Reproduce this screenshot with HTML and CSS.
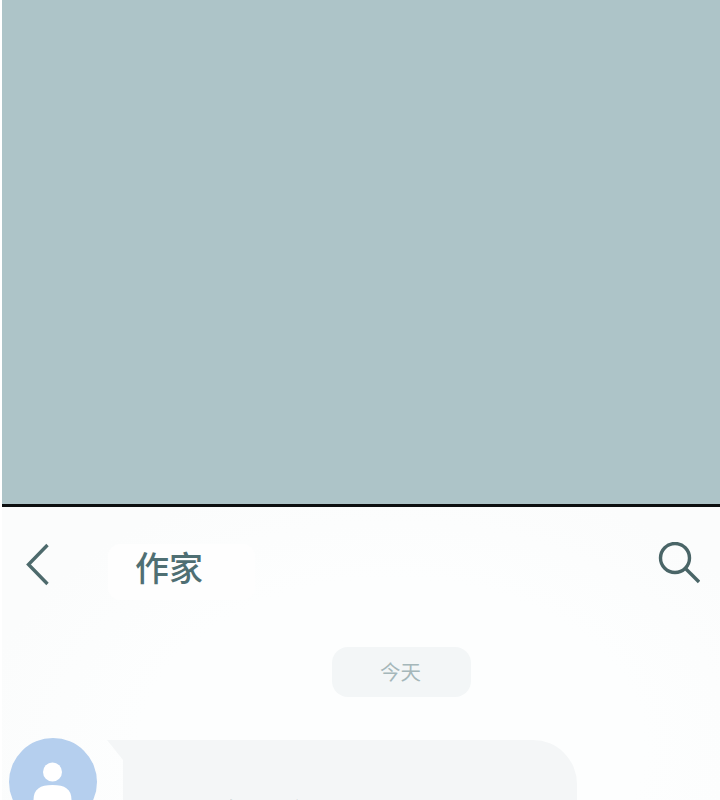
FILE: index.html
```html
<!DOCTYPE html>
<html lang="zh-CN">
<head>
    <meta charset="UTF-8">
    <title>作家</title>
    <link rel="stylesheet" href="styles.css">
</head>
<body>
    <div class="frame">
        <div class="cover"></div>
        <div class="divider"></div>
        <div class="chat">
            <header class="chat-header">
                <button class="icon-btn">
                    <svg width="26" height="44" viewBox="0 0 26 44">
                        <path d="M22.5 3 L3.5 22.5 L22.5 42" fill="none" stroke="#4d6a6c" stroke-width="3.4"/>
                    </svg>
                </button>
                <h1 class="chat-title">作家</h1>
                <button class="icon-btn search-btn">
                    <svg width="42" height="44" viewBox="0 0 42 44">
                        <circle cx="17" cy="16" r="14.5" fill="none" stroke="#4a6567" stroke-width="3.4"/>
                        <path d="M27.5 26.5 L41 40" fill="none" stroke="#4a6567" stroke-width="3.4"/>
                    </svg>
                </button>
            </header>
            <div class="date-row">
                <span class="date-pill">今天</span>
            </div>
            <div class="message">
                <div class="avatar">
                    <svg width="88" height="88" viewBox="0 0 88 88">
                        <circle cx="44" cy="44" r="44" fill="#b5cfee"/>
                        <circle cx="43.5" cy="34" r="9.5" fill="#fff"/>
                        <path d="M24.5 62 C24.5 51 31 47 43.5 47 C56 47 62.500 51 62.500 62 Z" fill="#fff"/>
                    </svg>
                </div>
                <div class="bubble">
                    <p class="bubble-text">你好，有什么作品</p>
                </div>
            </div>
        </div>
    </div>
</body>
</html>
```

FILE: styles.css
```css
html, body {
    margin: 0;
    height: 800px;
    overflow: hidden;
}

body {
    background-color: #fff;
    font-family: "Noto Sans CJK SC", "Liberation Sans", sans-serif;
}

.frame {
    height: 800px;
    margin-left: 2px;
    overflow: hidden;
}

.cover {
    height: 504px;
    background-color: #adc4c8;
}

.divider {
    height: 3px;
    background-color: #0c0f10;
}

.chat {
    height: 293px;
    background: radial-gradient(ellipse 420px 280px at 390px 240px, #fdfefe 60%, #fbfcfc 100%);
}

.chat-header {
    display: flex;
    align-items: flex-start;
    padding: 35px 20px 0 23px;
}

.icon-btn {
    display: flex;
    padding: 0;
    border: none;
    background: none;
}

.search-btn {
    margin-left: auto;
}

.chat-title {
    width: 120px;
    margin: 2px 0 0 57px;
    padding: 1px 0 11px 27px;
    border-radius: 12px;
    background-color: #fefefe;
    font-size: 34px;
    line-height: 44px;
    font-weight: 500;
    color: #4f6f73;
}

.date-row {
    display: flex;
    margin-top: 47px;
    margin-left: 330px;
}

.date-pill {
    width: 139px;
    height: 50px;
    border-radius: 16px;
    background-color: #f3f6f7;
    color: #a5b7ba;
    font-size: 20.5px;
    line-height: 48px;
    text-align: center;
    text-indent: -2px;
}

.message {
    display: flex;
    align-items: flex-start;
    gap: 26px;
    margin-top: 43px;
    margin-left: 7px;
}

.avatar {
    margin-top: -2px;
    flex-shrink: 0;
}

.bubble {
    position: relative;
    width: 454px;
    height: 120px;
    border-radius: 0 44px 44px 44px;
    background-color: #f4f6f7;
    box-sizing: border-box;
    padding: 52px 0 0 72px;
}

.bubble::before {
    content: "";
    position: absolute;
    top: 0;
    left: -16px;
    width: 16px;
    height: 20px;
    background-color: #f4f6f7;
    clip-path: polygon(0 0, 100% 0, 100% 100%);
}

.bubble-text {
    margin: 0;
    font-size: 30px;
    line-height: 40px;
    color: #3c4a4c;
}
```
